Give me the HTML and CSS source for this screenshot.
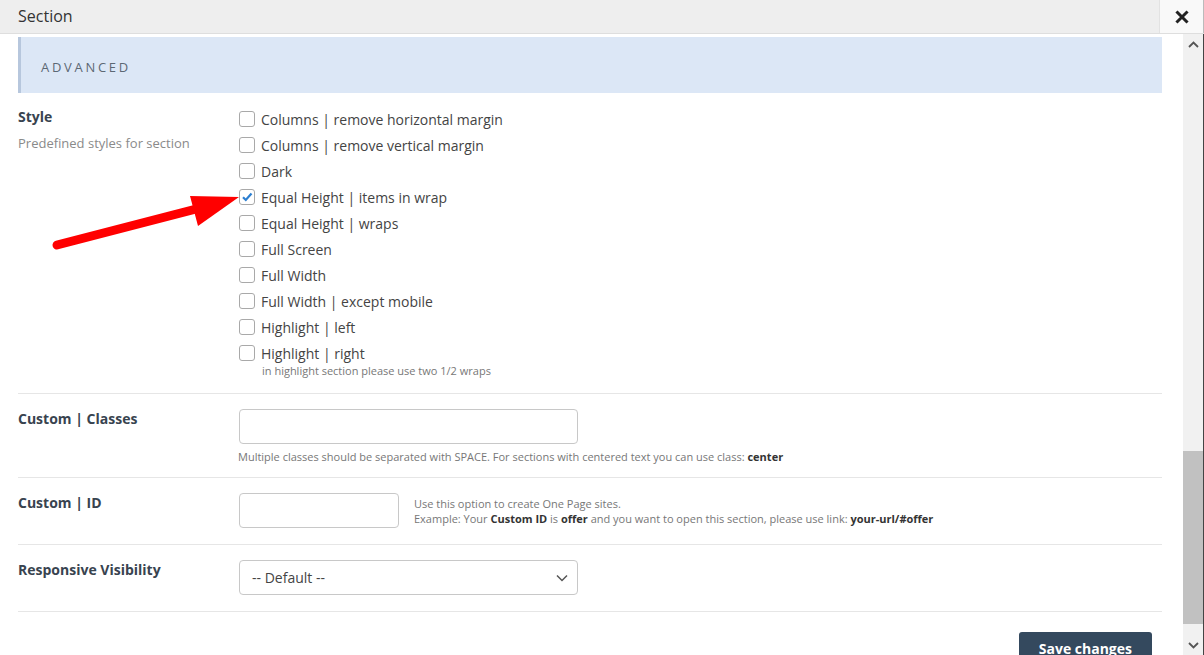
FILE: index.html
```html
<!DOCTYPE html>
<html>
<head>
<meta charset="utf-8">
<link rel="stylesheet" href="styles.css">
</head>
<body>
<div class="modal">
  <div class="header">
    <div class="title">Section</div>
    <div class="close">
      <svg width="14" height="14" viewBox="0 0 14 14"><path d="M2.5 2.5 L11.5 11.5 M11.5 2.5 L2.5 11.5" stroke="#222" stroke-width="3" stroke-linecap="square"/></svg>
    </div>
  </div>
  <div class="body">
    <div class="content">
      <div class="banner">ADVANCED</div>

      <div class="row row-style">
        <div class="label">
          <div class="name">Style</div>
          <div class="desc">Predefined styles for section</div>
        </div>
        <div class="field">
          <ul class="checks">
            <li><span class="box"></span>Columns | remove horizontal margin</li>
            <li><span class="box"></span>Columns | remove vertical margin</li>
            <li><span class="box"></span>Dark</li>
            <li><span class="box checked"><svg width="12" height="12" viewBox="0 0 12 12"><path d="M2 6.2 L4.8 9 L10.5 2.5" fill="none" stroke="#2c7fd1" stroke-width="2.2"/></svg></span>Equal Height | items in wrap</li>
            <li><span class="box"></span>Equal Height | wraps</li>
            <li><span class="box"></span>Full Screen</li>
            <li><span class="box"></span>Full Width</li>
            <li><span class="box"></span>Full Width | except mobile</li>
            <li><span class="box"></span>Highlight | left</li>
            <li><span class="box"></span>Highlight | right</li>
          </ul>
          <div class="note">in highlight section please use two 1/2 wraps</div>
        </div>
      </div>

      <div class="row row-classes">
        <div class="label"><div class="name">Custom | Classes</div></div>
        <div class="field">
          <div class="input wide"></div>
          <div class="help">Multiple classes should be separated with SPACE. For sections with centered text you can use class: <b>center</b></div>
        </div>
      </div>

      <div class="row row-id">
        <div class="label"><div class="name">Custom | ID</div></div>
        <div class="field inline">
          <div class="input narrow"></div>
          <div class="help side">Use this option to create One Page sites.<br>Example: Your <b>Custom ID</b> is <b>offer</b> and you want to open this section, please use link: <b>your-url/#offer</b></div>
        </div>
      </div>

      <div class="row row-vis">
        <div class="label"><div class="name">Responsive Visibility</div></div>
        <div class="field">
          <div class="input wide select">
            <span>-- Default --</span>
            <svg width="12" height="8" viewBox="0 0 12 8"><path d="M1 1.5 L6 6.5 L11 1.5" fill="none" stroke="#555" stroke-width="1.5"/></svg>
          </div>
        </div>
      </div>

      <div class="footer">
        <div class="btn">Save changes</div>
      </div>
    </div>
    <div class="scrollbar">
      <div class="arrow"><svg width="11" height="7" viewBox="0 0 11 7"><path d="M1 6 L5.5 1.5 L10 6" fill="none" stroke="#555" stroke-width="1.8"/></svg></div>
      <div class="track"><div class="thumb"></div></div>
      <div class="arrow"><svg width="11" height="7" viewBox="0 0 11 7"><path d="M1 1 L5.5 5.5 L10 1" fill="none" stroke="#555" stroke-width="1.8"/></svg></div>
    </div>
  </div>
  <svg class="pointer" width="260" height="270" viewBox="0 0 260 270">
    <path d="M57 245 L200 208" stroke="#ff0000" stroke-width="9" stroke-linecap="round"/>
    <path d="M239 197 L190 196 L198 226 Z" fill="#ff0000"/>
  </svg>
</div>
</body>
</html>
```

FILE: styles.css
```css
* { box-sizing: border-box; }
html, body { margin: 0; padding: 0; }
body {
  width: 1204px;
  height: 655px;
  overflow: hidden;
  font-family: "Open Sans", "Liberation Sans", sans-serif;
  background: #fff;
  color: #444;
}
.modal {
  position: relative;
  width: 1204px;
  height: 655px;
  display: flex;
  flex-direction: column;
}
.header {
  height: 34px;
  flex: 0 0 34px;
  display: flex;
  background: #eeeeee;
  border-bottom: 1px solid #dedede;
}
.title {
  flex: 1;
  padding-left: 18px;
  font-size: 16px;
  line-height: 33px;
  color: #333;
}
.close {
  width: 45px;
  background: #f9f9f9;
  border-left: 1px solid #e2e2e2;
  border-right: 1px solid #bbb;
  display: flex;
  align-items: center;
  justify-content: center;
}
.body {
  flex: 1;
  display: flex;
  min-height: 0;
}
.content {
  flex: 1;
  padding: 3px 21px 0 18px;
  overflow: hidden;
}
.banner {
  height: 56px;
  background: #dce7f6;
  border-left: 3px solid #b7c7dd;
  padding: 2px 0 0 20px;
  font-size: 13px;
  letter-spacing: 2.7px;
  line-height: 56px;
  color: #5c6874;
}
.row {
  display: grid;
  grid-template-columns: 221px 1fr;
  padding: 15px 0 15px;
  border-bottom: 1px solid #e6e6e6;
}
.row-style { padding-top: 13px; padding-bottom: 15px; }
.row-classes { padding-bottom: 13px; }
.row-id { padding-bottom: 16px; }
.row-vis { padding-bottom: 16px; }
.name {
  font-size: 14px;
  font-weight: 700;
  line-height: 20px;
  color: #38434f;
}
.row-style .name { line-height: 22px; }
.desc {
  margin-top: 5px;
  font-size: 13px;
  line-height: 20px;
  color: #8a8a8a;
}
.checks {
  list-style: none;
  margin: 0;
  padding: 0;
}
.checks li {
  display: flex;
  align-items: center;
  height: 26px;
  font-size: 14px;
  color: #444;
}
.box {
  width: 16px;
  height: 16px;
  border: 1px solid #a9a9a9;
  border-radius: 3px;
  margin-right: 6px;
  display: flex;
  align-items: center;
  justify-content: center;
  background: #fff;
}
.note {
  margin-top: -2px;
  padding-left: 23px;
  font-size: 11px;
  line-height: 14px;
  color: #777;
}
.input {
  height: 35px;
  border: 1px solid #c8c8c8;
  border-radius: 4px;
  background: #fff;
}
.wide { width: 339px; }
.narrow { width: 160px; flex: 0 0 160px; }
.help {
  margin-top: 6px;
  font-size: 11px;
  line-height: 14px;
  color: #777;
  margin-left: -1px;
}
.help b { color: #333; font-weight: 700; }
.inline { display: flex; align-items: flex-start; }
.help.side {
  margin: 3px 0 0 15px;
  line-height: 15px;
}
.select {
  display: flex;
  align-items: center;
  justify-content: space-between;
  padding: 0 9px 0 12px;
  font-size: 14px;
  color: #444;
}
.footer {
  display: flex;
  justify-content: flex-end;
  padding: 20px 10px 0 0;
}
.btn {
  background: #34495e;
  color: #fff;
  font-weight: 700;
  font-size: 14px;
  height: 36px;
  line-height: 34px;
  padding: 0 20px;
  border-radius: 3px 3px 0 0;
}
.scrollbar {
  width: 21px;
  flex: 0 0 21px;
  background: #f1f1f1;
  border-right: 1px solid #444;
  display: flex;
  flex-direction: column;
}
.arrow {
  height: 20px;
  display: flex;
  align-items: center;
  justify-content: center;
}
.track {
  flex: 1;
  position: relative;
}
.thumb {
  position: absolute;
  left: 0;
  right: 0;
  top: 397px;
  height: 173px;
  background: #c1c1c1;
}
.pointer {
  position: absolute;
  left: 0;
  top: 0;
  pointer-events: none;
}
```
